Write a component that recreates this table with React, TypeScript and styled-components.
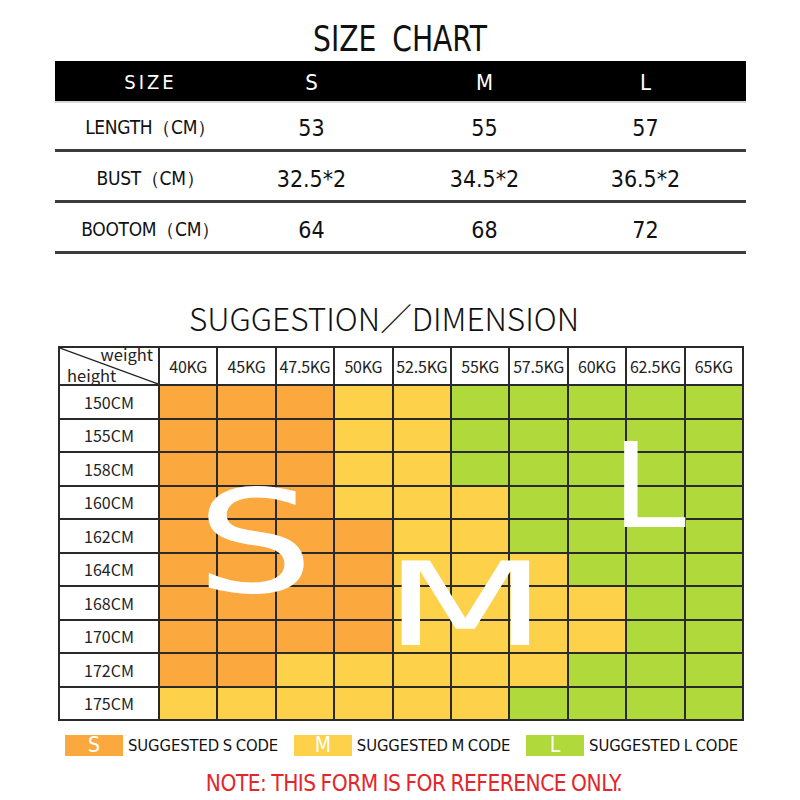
import styled, { createGlobalStyle } from "styled-components";

const GlobalStyle = createGlobalStyle`
  html, body {
    margin: 0;
    padding: 0;
    background: #ffffff;
  }
  * {
    box-sizing: border-box;
  }
`;

const NARROW = `"Liberation Sans Narrow", "DejaVu Sans Condensed", "Liberation Sans", sans-serif`;
const SANS = `"Noto Sans CJK SC", "Noto Sans", sans-serif`;

const COLORS: Record<string, string> = {
  O: "#fba83f",
  Y: "#fdd149",
  G: "#b0d93b",
};

const sizeRows = [
  { label: "LENGTH（CM）", values: ["53", "55", "57"] },
  { label: "BUST（CM）", values: ["32.5*2", "34.5*2", "36.5*2"] },
  { label: "BOOTOM（CM）", values: ["64", "68", "72"] },
];

const weights = ["40KG", "45KG", "47.5KG", "50KG", "52.5KG", "55KG", "57.5KG", "60KG", "62.5KG", "65KG"];

const heights = [
  { h: "150CM", codes: "OOOYYGGGGG" },
  { h: "155CM", codes: "OOOYYGGGGG" },
  { h: "158CM", codes: "OOOYYGGGGG" },
  { h: "160CM", codes: "OOOYYYGGGG" },
  { h: "162CM", codes: "OOOOYYGGGG" },
  { h: "164CM", codes: "OOOOYYYGGG" },
  { h: "168CM", codes: "OOOOYYYYGG" },
  { h: "170CM", codes: "OOOOYYYYGG" },
  { h: "172CM", codes: "OOYYYYYGGG" },
  { h: "175CM", codes: "YYYYYYGGGG" },
];

const legend = [
  { code: "S", color: COLORS.O, text: "SUGGESTED S CODE" },
  { code: "M", color: COLORS.Y, text: "SUGGESTED M CODE" },
  { code: "L", color: COLORS.G, text: "SUGGESTED L CODE" },
];

function App() {
  return (
    <Page>
      <GlobalStyle />
      <Title>SIZE CHART</Title>
      <SizeTable>
        <HeadRow>
          <HeadCell $spaced>SIZE</HeadCell>
          <HeadCell>S</HeadCell>
          <HeadCell>M</HeadCell>
          <HeadCell>L</HeadCell>
        </HeadRow>
        {sizeRows.map((r) => (
          <BodyRow key={r.label}>
            <RowLabel>{r.label}</RowLabel>
            {r.values.map((v, i) => (
              <RowValue key={i}>{v}</RowValue>
            ))}
          </BodyRow>
        ))}
      </SizeTable>

      <SubTitle>SUGGESTION／DIMENSION</SubTitle>
      <ChartWrap>
        <ChartGrid>
          <Corner>
            <Diagonal viewBox="0 0 100 100" preserveAspectRatio="none">
              <line x1="0" y1="0" x2="100" y2="100" stroke="#222" strokeWidth="1.2" vectorEffect="non-scaling-stroke" />
            </Diagonal>
            <CornerWeight>weight</CornerWeight>
            <CornerHeight>height</CornerHeight>
          </Corner>
          {weights.map((w) => (
            <WeightCell key={w}>{w}</WeightCell>
          ))}
          {heights.map((row) => (
            <>
              <HeightCell key={row.h}>{row.h}</HeightCell>
              {row.codes.split("").map((c, i) => (
                <ColorCell key={row.h + i} $color={COLORS[c]} />
              ))}
            </>
          ))}
        </ChartGrid>
        <BigLetter $left={138} $top={125} $size={143} $scale={1.3}>S</BigLetter>
        <BigLetter $left={325} $top={202} $size={115} $scale={1.66}>M</BigLetter>
        <BigLetter $left={553} $top={82} $size={117} $scale={1.15}>L</BigLetter>
      </ChartWrap>

      <Legend>
        {legend.map((l) => (
          <LegendItem key={l.code}>
            <Swatch $color={l.color}>{l.code}</Swatch>
            <LegendText>{l.text}</LegendText>
          </LegendItem>
        ))}
      </Legend>
      <Note>NOTE: THIS FORM IS FOR REFERENCE ONLY.</Note>
    </Page>
  );
}

const Page = styled.div`
  width: 800px;
  height: 800px;
  display: flex;
  flex-direction: column;
  align-items: center;
  background: #ffffff;
  color: #111111;
  overflow: hidden;
`;

const Title = styled.div`
  margin-top: 19px;
  height: 42px;
  line-height: 40px;
  font-family: ${NARROW};
  font-size: 36px;
  word-spacing: 8px;
  color: #111;
  transform: scaleX(0.87);
`;

const SizeTable = styled.div`
  width: 691px;
  display: flex;
  flex-direction: column;
`;

const HeadRow = styled.div`
  height: 40px;
  background: #000;
  display: grid;
  grid-template-columns: 192px 130px 216px 1fr;
  padding-right: 47px;
  align-items: center;
  box-shadow: 0 2px 0 #d6d6d6;
`;

const HeadCell = styled.div<{ $spaced?: boolean }>`
  text-align: center;
  color: #fff;
  font-family: ${NARROW};
  font-size: ${(p) => (p.$spaced ? "20px" : "22px")};
  letter-spacing: ${(p) => (p.$spaced ? "3px" : "0")};
  padding-top: 2px;
`;

const BodyRow = styled.div`
  height: 51px;
  display: grid;
  grid-template-columns: 192px 130px 216px 1fr;
  padding-right: 47px;
  align-items: center;
  border-bottom: 3px solid #3c3c3c;
`;

const RowLabel = styled.div`
  text-align: center;
  font-family: ${NARROW};
  font-size: 19px;
  letter-spacing: -0.3px;
  color: #111;
  padding-top: 6px;
`;

const RowValue = styled.div`
  text-align: center;
  font-family: ${NARROW};
  font-size: 23px;
  color: #111;
  padding-top: 6px;
`;

const SubTitle = styled.div`
  margin-top: 38px;
  height: 54px;
  line-height: 50px;
  font-family: ${SANS};
  font-size: 31.6px;
  font-weight: 300;
  color: #111;
  margin-left: -32px;
`;

const ChartWrap = styled.div`
  position: relative;
  width: 686px;
  margin-left: 2px;
`;

const ChartGrid = styled.div`
  display: grid;
  grid-template-columns: 98px repeat(10, 1fr);
  grid-template-rows: 36px repeat(10, 31.5px);
  gap: 2px;
  border: 2px solid #2a2a2a;
  background: #2a2a2a;
  font-family: ${SANS};
`;

const Corner = styled.div`
  position: relative;
  background: #fff;
  display: flex;
  flex-direction: column;
  justify-content: space-between;
  padding: 0 5px 0 7px;
  font-size: 16.5px;
  line-height: 17px;
  color: #222;
`;

const Diagonal = styled.svg`
  position: absolute;
  inset: 0;
  width: 100%;
  height: 100%;
`;

const CornerWeight = styled.span`
  position: relative;
  align-self: flex-end;
  margin-top: -2px;
`;

const CornerHeight = styled.span`
  position: relative;
  align-self: flex-start;
`;

const WeightCell = styled.div`
  background: #fff;
  display: flex;
  align-items: center;
  justify-content: center;
  font-size: 16px;
  color: #222;
  white-space: nowrap;
  letter-spacing: -0.2px;
`;

const HeightCell = styled.div`
  background: #fff;
  display: flex;
  align-items: center;
  justify-content: center;
  font-size: 16px;
  color: #222;
`;

const ColorCell = styled.div<{ $color: string }>`
  background: ${(p) => p.$color};
`;

const BigLetter = styled.span<{ $left: number; $top: number; $size: number; $scale: number }>`
  position: absolute;
  left: ${(p) => p.$left}px;
  top: ${(p) => p.$top}px;
  font-family: "DejaVu Sans", sans-serif;
  font-size: ${(p) => p.$size}px;
  line-height: 1;
  color: #fff;
  transform: scaleX(${(p) => p.$scale});
  transform-origin: left top;
  pointer-events: none;
`;

const Legend = styled.div`
  width: 800px;
  margin-top: 14px;
  padding: 0 62px 0 65px;
  display: flex;
  justify-content: space-between;
  align-items: center;
`;

const LegendItem = styled.div`
  display: flex;
  align-items: center;
  gap: 5px;
`;

const Swatch = styled.div<{ $color: string }>`
  width: 58px;
  height: 21px;
  background: ${(p) => p.$color};
  color: #fff;
  font-family: ${NARROW};
  font-size: 21px;
  line-height: 21px;
  text-align: center;
`;

const LegendText = styled.span`
  font-family: ${NARROW};
  font-size: 16.5px;
  color: #111;
  letter-spacing: -0.1px;
  word-spacing: -1px;
`;

const Note = styled.div`
  margin-top: 14px;
  margin-left: 28px;
  font-family: ${NARROW};
  font-size: 22.5px;
  letter-spacing: -0.5px;
  word-spacing: -1px;
  color: #e3262a;
`;

export default App;
